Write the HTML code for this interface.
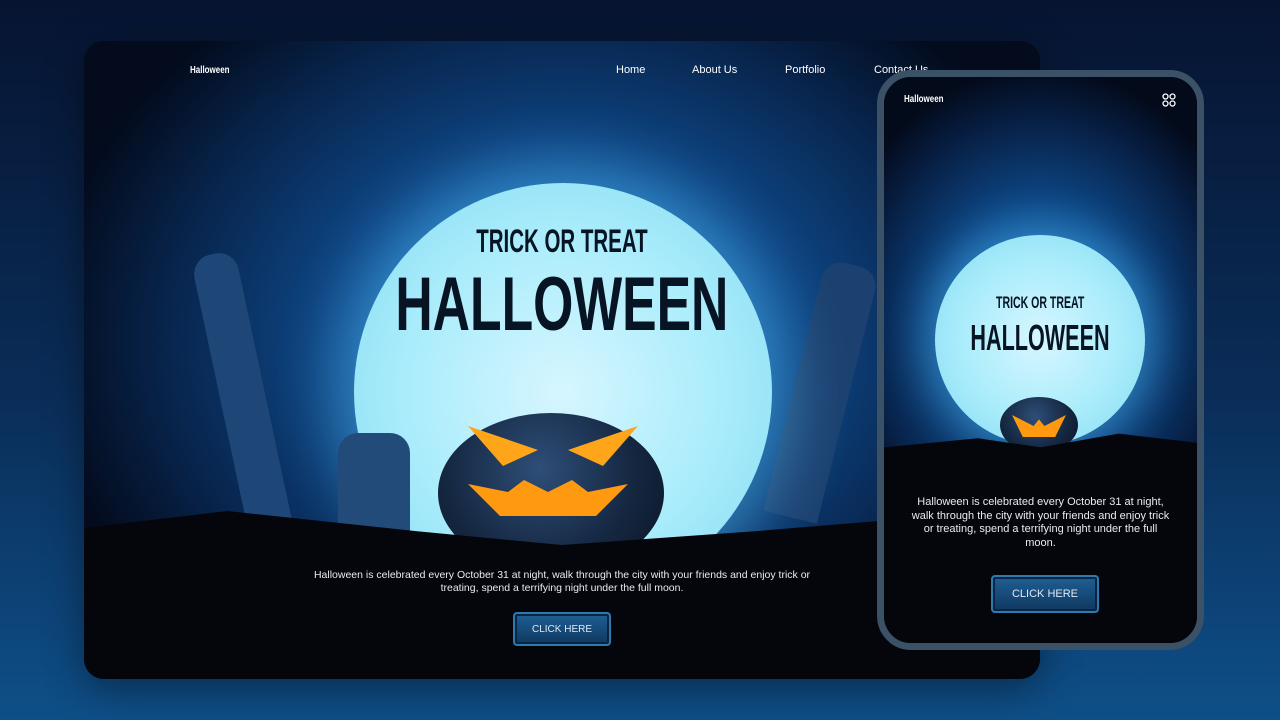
<!DOCTYPE html>
<html><head><meta charset="utf-8"><style>
*{margin:0;padding:0;box-sizing:border-box}
body{width:1280px;height:720px;overflow:hidden;background:linear-gradient(180deg,#061431 0%,#0a2d58 55%,#0e4f88 100%);font-family:"Liberation Sans",sans-serif;position:relative}
.card{position:absolute;left:84px;top:41px;width:956px;height:638px;border-radius:20px;overflow:hidden;background:#05060c;box-shadow:0 10px 40px rgba(0,0,0,.4)}
.sky{position:absolute;left:0;top:0;width:956px;height:520px;background:radial-gradient(ellipse 520px 420px at 480px 300px,#1a6fc0 0%,#0f4b8d 40%,#08264f 75%,#030b1d 100%)}
.moon{position:absolute;border-radius:50%;background:radial-gradient(circle at 50% 50%,#d6f6ff 0%,#a9ecfb 55%,#7fd8f2 100%);box-shadow:0 0 60px 20px rgba(90,200,255,.45)}
.title{position:absolute;text-align:center;color:#071424;font-weight:bold;white-space:nowrap}
.title span{display:inline-block}
.grass{position:absolute;background:#05060c}
.nav{position:absolute;color:#fff;font-size:11px}
.logo{position:absolute;color:#fff;font-weight:bold;font-size:10px;transform:scaleX(.8);transform-origin:left}
.txt{position:absolute;color:#e6ecf2;text-align:center;font-size:10.5px;line-height:13px}
.btn{position:absolute;border-radius:4px;background:linear-gradient(#1f5f95,#0f3860);border:2px solid #2d7ab0;box-shadow:inset 0 0 0 2px #0b2540;color:#dfeaf5;font-size:11px;display:flex;align-items:center;justify-content:center}
.phone{position:absolute;left:877px;top:70px;width:327px;height:580px;border:7px solid #3a5166;border-radius:34px;overflow:hidden;background:#03050d}
.psky{position:absolute;left:0;top:0;width:313px;height:380px;background:radial-gradient(ellipse 220px 260px at 156px 250px,#1a6fc0 0%,#0e4a8a 45%,#071f44 80%,#030a1a 100%)}
.pump{position:absolute;border-radius:50%;background:radial-gradient(circle at 45% 35%,#2e4e78,#14263f 60%,#0a1424)}
.stone{position:absolute;background:#1b3a63;border-radius:20px 20px 0 0}
</style></head><body>
<div class="card">
 <div class="sky"></div>
 <div class="stone" style="left:135px;top:210px;width:45px;height:280px;transform:rotate(-12deg);background:#1e4677"></div>
 <div class="stone" style="left:710px;top:220px;width:55px;height:260px;transform:rotate(14deg);background:#1c4170"></div>
 <div class="moon" style="left:270px;top:142px;width:418px;height:418px"></div>
 <div class="title" style="left:178px;top:182px;width:600px;font-size:32px"><span style="transform:scaleX(.64)">TRICK OR TREAT</span></div>
 <div class="title" style="left:78px;top:220px;width:800px;font-size:76px"><span style="transform:scaleX(.68)">HALLOWEEN</span></div>
 <div class="stone" style="left:254px;top:392px;width:72px;height:110px;background:#234b7a"></div>
 <div class="pump" style="left:354px;top:372px;width:226px;height:160px"></div>
 <div style="position:absolute;left:384px;top:385px;width:70px;height:40px;background:#ffa51a;clip-path:polygon(0 0,100% 60%,50% 100%);"></div>
 <div style="position:absolute;left:484px;top:385px;width:70px;height:40px;background:#ffa51a;clip-path:polygon(100% 0,0 60%,50% 100%);"></div>
 <div style="position:absolute;left:384px;top:435px;width:160px;height:40px;background:#ff9a10;clip-path:polygon(0 20%,25% 40%,35% 10%,50% 40%,65% 10%,75% 40%,100% 20%,80% 100%,20% 100%)"></div>
 <div class="grass" style="left:0;top:470px;width:956px;height:170px;clip-path:polygon(0 10%,15% 0,35% 12%,50% 20%,70% 12%,85% 5%,100% 0,100% 100%,0 100%)"></div>
 <div class="logo" style="left:106px;top:24px">Halloween</div>
 <div class="nav" style="left:532px;top:23px">Home</div>
 <div class="nav" style="left:608px;top:23px">About Us</div>
 <div class="nav" style="left:701px;top:23px">Portfolio</div>
 <div class="nav" style="left:790px;top:23px">Contact Us</div>
 <div class="txt" style="left:226px;top:528px;width:504px">Halloween is celebrated every October 31 at night, walk through the city with your friends and enjoy trick or treating, spend a terrifying night under the full moon.</div>
 <div class="btn" style="left:429px;top:571px;width:98px;height:34px;font-size:10px">CLICK HERE</div>
</div>
<div class="phone">
 <div class="psky"></div>
 <div class="moon" style="left:51px;top:158px;width:210px;height:210px;box-shadow:0 0 40px 12px rgba(90,200,255,.4)"></div>
 <div class="title" style="left:-44px;top:216px;width:400px;font-size:17px"><span style="transform:scaleX(.62)">TRICK OR TREAT</span></div>
 <div class="title" style="left:-44px;top:240px;width:400px;font-size:36px"><span style="transform:scaleX(.6)">HALLOWEEN</span></div>
 <div class="pump" style="left:116px;top:320px;width:78px;height:56px"></div>
 <div style="position:absolute;left:128px;top:338px;width:54px;height:22px;background:#ff9a10;clip-path:polygon(0 0,40% 50%,50% 20%,60% 50%,100% 0,80% 100%,20% 100%)"></div>
 <div class="grass" style="left:0;top:352px;width:313px;height:230px;clip-path:polygon(0 8%,30% 4%,50% 8%,75% 2%,100% 6%,100% 100%,0 100%)"></div>
 <div class="logo" style="left:20px;top:17px">Halloween</div>
 <svg style="position:absolute;left:278px;top:16px" width="14" height="14" viewBox="0 0 14 14" fill="none" stroke="#fff" stroke-width="1.3"><circle cx="3.5" cy="3.5" r="2.5"/><circle cx="10.5" cy="3.5" r="2.5"/><circle cx="3.5" cy="10.5" r="2.5"/><circle cx="10.5" cy="10.5" r="2.5"/></svg>
 <div class="txt" style="left:24px;top:419px;width:265px;font-size:11px;line-height:13.5px">Halloween is celebrated every October 31 at night, walk through the city with your friends and enjoy trick or treating, spend a terrifying night under the full moon.</div>
 <div class="btn" style="left:107px;top:498px;width:108px;height:38px">CLICK HERE</div>
</div>
</body></html>
